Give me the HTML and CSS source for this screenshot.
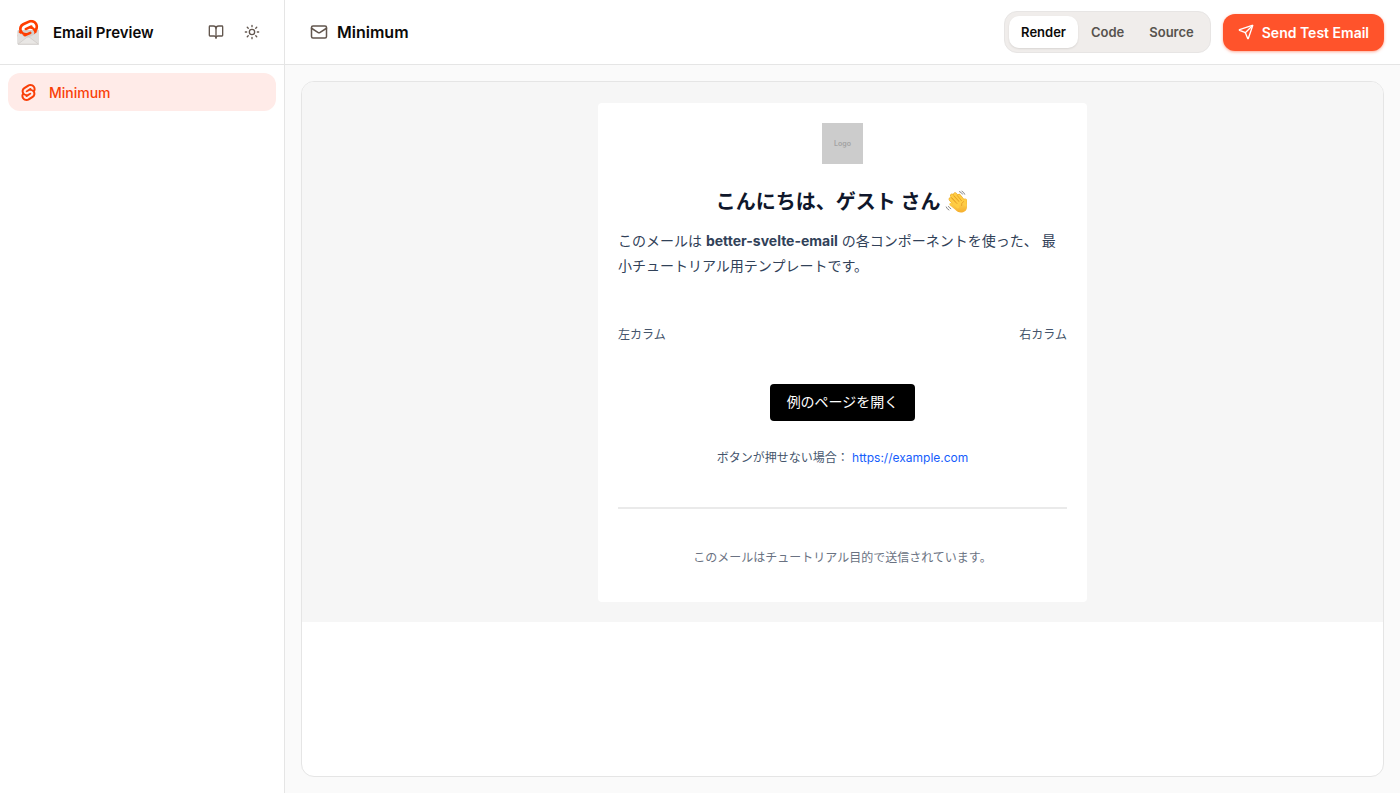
FILE: index.html
```html
<!DOCTYPE html>
<html lang="ja">
<head>
<meta charset="utf-8">
<title>Email Preview</title>
<link rel="stylesheet" href="styles.css">
</head>
<body>
<svg class="defs" aria-hidden="true">
  <symbol id="svelte" viewBox="0 0 24 24"><path d="M10.354 21.125a4.44 4.44 0 0 1-4.765-1.767 4.109 4.109 0 0 1-.703-3.107 3.898 3.898 0 0 1 .134-.522l.105-.321.287.21a7.21 7.21 0 0 0 2.186 1.092l.208.063-.02.208a1.253 1.253 0 0 0 .226.83 1.337 1.337 0 0 0 1.435.533 1.231 1.231 0 0 0 .343-.15l5.59-3.562a1.164 1.164 0 0 0 .524-.778 1.242 1.242 0 0 0-.211-.937 1.338 1.338 0 0 0-1.435-.533 1.23 1.23 0 0 0-.343.15l-2.133 1.36a4.078 4.078 0 0 1-1.135.499 4.44 4.44 0 0 1-4.765-1.766 4.108 4.108 0 0 1-.702-3.108 3.855 3.855 0 0 1 1.742-2.582l5.589-3.563a4.072 4.072 0 0 1 1.135-.499 4.44 4.44 0 0 1 4.765 1.767 4.109 4.109 0 0 1 .703 3.107 3.943 3.943 0 0 1-.134.522l-.105.321-.286-.21a7.204 7.204 0 0 0-2.187-1.093l-.208-.063.02-.207a1.255 1.255 0 0 0-.226-.831 1.337 1.337 0 0 0-1.435-.532 1.231 1.231 0 0 0-.343.15L8.62 9.368a1.162 1.162 0 0 0-.524.778 1.24 1.24 0 0 0 .211.937 1.338 1.338 0 0 0 1.435.533 1.235 1.235 0 0 0 .344-.151l2.132-1.36a4.067 4.067 0 0 1 1.135-.498 4.44 4.44 0 0 1 4.765 1.766 4.108 4.108 0 0 1 .702 3.108 3.857 3.857 0 0 1-1.742 2.583l-5.589 3.562a4.072 4.072 0 0 1-1.135.499m10.358-17.95C18.484-.015 14.082-.96 10.9 1.068L5.31 4.63a6.412 6.412 0 0 0-2.896 4.295 6.753 6.753 0 0 0 .666 4.336 6.43 6.43 0 0 0-.96 2.396 6.833 6.833 0 0 0 1.168 5.167c2.229 3.19 6.63 4.135 9.812 2.108l5.59-3.562a6.41 6.41 0 0 0 2.896-4.295 6.756 6.756 0 0 0-.665-4.336 6.429 6.429 0 0 0 .958-2.396 6.831 6.831 0 0 0-1.167-5.168Z"/></symbol>
</svg>
<div class="app">
  <aside class="sidebar">
    <div class="bar brand">
      <svg class="brand-logo" viewBox="0 0 24 28" aria-hidden="true">
        <rect x="1.500" y="12" width="21.500" height="14.500" rx="1" fill="#d3d0cd"/>
        <g transform="rotate(8 12.500 13)" fill="#ff3e00"><use href="#svelte" x="0.500" y="1.500" width="23" height="23"/></g>
        <path d="M1.500 13.500L8 18.500Q12.200 20.500 16.500 17.500L23 12.500V25.500a1 1 0 0 1-1 1H2.500a1 1 0 0 1-1-1z" fill="#e1dfdd"/>
        <path d="M2 26.200L10.500 19.600q1.700-1.300 3.400 0L22.500 26.200z" fill="#e9e7e5" stroke="#c9c5c1" stroke-width=".6"/>
      </svg>
      <h1 class="brand-name">Email Preview</h1>
      <a class="icon-link" href="#docs" aria-label="Documentation"><svg class="icon" viewBox="0 0 24 24"><path d="M12 7v14"/><path d="M3 18a1 1 0 0 1-1-1V4a1 1 0 0 1 1-1h5a4 4 0 0 1 4 4 4 4 0 0 1 4-4h5a1 1 0 0 1 1 1v13a1 1 0 0 1-1 1h-6a3 3 0 0 0-3 3 3 3 0 0 0-3-3z"/></svg></a>
      <button class="icon-link" type="button" aria-label="Toggle theme"><svg class="icon" viewBox="0 0 24 24"><circle cx="12" cy="12" r="4"/><path d="M12 2v2M12 20v2M4.930 4.930l1.410 1.410M17.660 17.660l1.410 1.410M2 12h2M20 12h2M6.340 17.660l-1.410 1.410M19.070 4.930l-1.410 1.410"/></svg></button>
    </div>
    <nav class="nav">
      <a class="nav-item" href="#minimum"><svg class="nav-icon" viewBox="0 0 24 24" aria-hidden="true"><use href="#svelte"/></svg>Minimum</a>
    </nav>
  </aside>
  <main class="main">
    <header class="bar topbar">
      <svg class="icon mail-icon" viewBox="0 0 24 24" aria-hidden="true"><rect x="2" y="4" width="20" height="16" rx="2"/><path d="m22 7-8.970 5.700a1.940 1.940 0 0 1-2.060 0L2 7"/></svg>
      <h2 class="title">Minimum</h2>
      <div class="tabs">
        <button class="tab tab-active" type="button">Render</button>
        <button class="tab" type="button">Code</button>
        <button class="tab" type="button">Source</button>
      </div>
      <button class="send" type="button"><svg class="icon send-icon" viewBox="0 0 24 24" aria-hidden="true"><path d="M14.536 21.686a.5.5 0 0 0 .937-.024l6.500-19a.496.496 0 0 0-.635-.635l-19 6.500a.5.5 0 0 0-.024.937l7.930 3.180a2 2 0 0 1 1.112 1.110z"/><path d="m21.854 2.147-10.940 10.939"/></svg>Send Test Email</button>
    </header>
    <section class="stage">
      <div class="preview">
        <div class="mail-bg">
          <article class="mail">
            <div class="logo">Logo</div>
            <h3 class="greeting">こんにちは、ゲスト さん <svg class="wave" viewBox="0 0 24 24" role="img" aria-label="👋">
              <defs><linearGradient id="skin" x1="0" y1="0" x2="0" y2="1"><stop offset="0" stop-color="#ffdb58"/><stop offset="1" stop-color="#f6ae2d"/></linearGradient></defs>
              <g stroke="#e9a322" stroke-width="3.800" stroke-linecap="round"><path d="M5.500 9.200L13 17M6.900 5.600L14.500 14M10 4.300L17 12"/><path d="M14.100 5.800L18.500 11.500"/><path d="M20 10.500V15"/></g>
              <path d="M4.500 13.500q1.500-1.500 3.500.5L17 9.500l2 2q2.500 1.500 3 5c.2 3.500-2 5.500-5 6-3 .4-5-1-7-3l-5-4q-1.200-1-.5-2z" fill="url(#skin)"/>
              <g stroke="#ffcd43" stroke-width="2.900" stroke-linecap="round"><path d="M5.500 9.200L13 17M6.900 5.600L14.500 14M10 4.300L17 12"/><path d="M14.100 5.800L18.500 11.500"/><path d="M20.200 10.500V15"/></g>
              <path d="M7 8.200l5 5.400M9 6l5 5.600M12.300 5.500l4.200 5.200M18.600 11.500q-2.800 1.500-2.100 4" fill="none" stroke="#df9120" stroke-width=".7" stroke-linecap="round"/>
              <path d="M14.500 1.600q2 .5 3 2.500M17 1.200q2 1 2.700 3M1.200 17q.7 2 2.700 3M3.500 16.500q.8 1.500 2.300 2.200" fill="none" stroke="#777" stroke-width=".9" stroke-linecap="round"/>
            </svg></h3>
            <p class="intro">このメールは <strong>better-svelte-email</strong> の各コンポーネントを使った、 最小チュートリアル用テンプレートです。</p>
            <div class="columns"><span>左カラム</span><span>右カラム</span></div>
            <a class="cta" href="https://example.com">例のページを開く</a>
            <p class="fallback">ボタンが押せない場合： <a class="link" href="https://example.com">https://example.com</a></p>
            <hr class="rule">
            <p class="foot">このメールはチュートリアル目的で送信されています。</p>
          </article>
        </div>
      </div>
    </section>
  </main>
</div>
</body>
</html>
```
FILE: styles.css
```css
* { box-sizing: border-box; }
body { margin: 0; background: #fafafa; color: #0c0a09; font-family: Inter, "Noto Sans CJK JP", sans-serif; font-size: 14px; }
h1, h2, h3, p { margin: 0; }
button { border: 0; background: none; font: inherit; cursor: pointer; }
a { color: inherit; text-decoration: none; }
.defs { position: absolute; width: 0; height: 0; }
.app { display: flex; min-height: 100vh; }
.sidebar { flex: none; width: 285px; background: #fff; border-right: 1px solid #e5e5e5; }
.main { flex: 1; min-width: 0; display: flex; flex-direction: column; }
.bar { display: flex; align-items: center; height: 65px; border-bottom: 1px solid #e5e5e5; background: #fff; }
.icon { display: block; width: 16px; height: 16px; fill: none; stroke: #62564e; stroke-width: 2; stroke-linecap: round; stroke-linejoin: round; }

.brand { padding: 0 14px 0 16px; }
.brand-logo { width: 24px; height: 28px; margin-right: 13px; }
.brand-name { flex: 1; font-size: 15px; font-weight: 600; }
.icon-link { display: grid; place-items: center; width: 36px; height: 36px; padding: 0; }
.nav { padding: 8px; }
.nav-item { display: flex; align-items: center; gap: 12px; height: 38px; padding: 0 12px; border-radius: 12px; background: #ffebe8; color: #f93f08; font-weight: 500; }
.nav-icon { width: 17px; height: 17px; fill: #f93f08; }

.topbar { padding: 0 16px 0 25px; }
.mail-icon { width: 18px; height: 18px; margin-right: 9px; }
.title { flex: 1; font-size: 16px; font-weight: 600; }
.tabs { display: flex; gap: 1px; padding: 4px; margin-right: 12px; border: 1px solid #e7e5e4; border-radius: 13px; background: #f0edeb; }
.tab { height: 32px; padding: 0 12px; border-radius: 10px; color: #57534e; font-size: 13px; font-weight: 600; }
.tab-active { background: #fff; color: #0c0a09; box-shadow: 0 1px 2px #0000001a; }
.send { display: flex; align-items: center; gap: 8px; height: 37px; padding: 0 15px; border-radius: 12px; background: #ff532b; color: #fff; font-size: 14px; font-weight: 600; box-shadow: 0 1px 3px #ff532b80; }
.send-icon { stroke: #fff; }

.stage { flex: 1; display: flex; padding: 16px; }
.preview { flex: 1; border: 1px solid #e5e5e5; border-radius: 13px; background: #fff; overflow: hidden; }
.mail-bg { padding: 21px 20px 20px; background: #f6f6f6; }
.mail { display: flex; flex-direction: column; align-items: center; max-width: 489px; margin: 0 auto; padding: 20px; border-radius: 4px; background: #fff; }
.logo { display: grid; place-items: center; width: 41px; height: 41px; background: #ccc; color: #a3a3a3; font-size: 7px; font-weight: 600; }
.greeting { margin-top: 24px; color: #0f172b; font-size: 20px; line-height: 28px; font-weight: 700; }
.wave { width: 24px; height: 24px; vertical-align: -5px; }
.intro { align-self: stretch; margin-top: 12px; color: #314158; line-height: 25px; }
.columns { align-self: stretch; display: flex; justify-content: space-between; margin-top: 48px; color: #45556c; font-size: 12px; line-height: 18px; }
.cta { margin-top: 40px; padding: 0 17px 1px; border-radius: 4px; background: #000; color: #fff; line-height: 36px; }
.fallback { margin-top: 28px; color: #45556c; font-size: 12px; line-height: 18px; }
.link { color: #155dfc; }
.rule { align-self: stretch; margin: 40px 0; border: 0; border-top: 2px solid #eaeaea; }
.foot { margin-bottom: 15px; color: #6a7282; font-size: 12px; line-height: 18px; }
```
